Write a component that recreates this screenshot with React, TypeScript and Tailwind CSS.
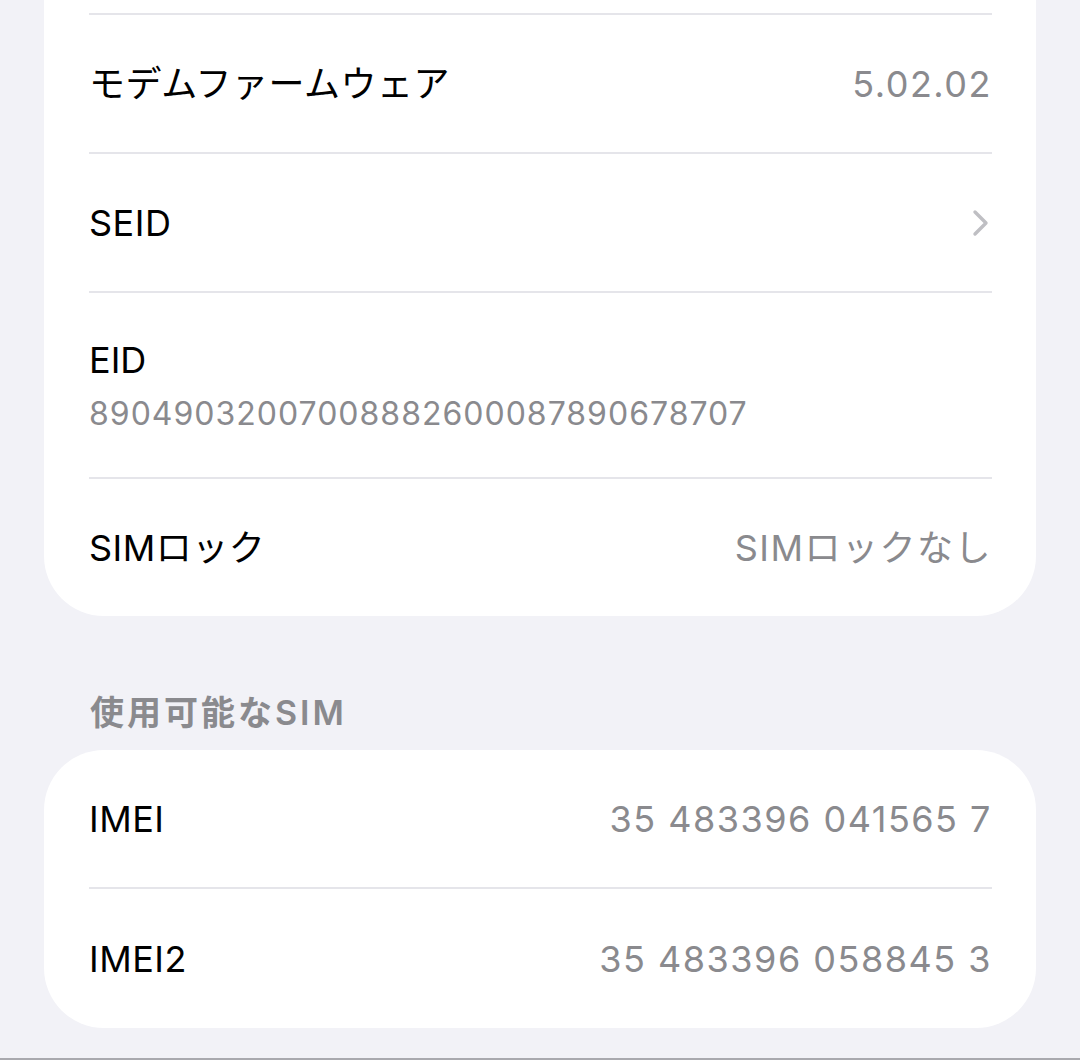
import React from "react";

const font = { fontFamily: 'Inter, "Noto Sans CJK JP", sans-serif' };

function Divider() {
  return <div className="h-[2px] bg-[#e5e5ea]" />;
}

function Row({ label, value, chevron, h = "h-[137px]" }: { label: string; value?: string; chevron?: boolean; h?: string }) {
  return (
    <div className={`flex ${h} items-center justify-between`}>
      <span className="text-[36px] leading-[44px] tracking-[0.5px] text-black">{label}</span>
      {value && <span className="text-[36px] leading-[44px] tracking-[1.5px] text-[#8a8a8e]">{value}</span>}
      {chevron && (
        <svg width="18" height="28" viewBox="0 0 18 28" className="mr-[2px]">
          <path d="M3 3 L14 14 L3 25" fill="none" stroke="#bfbfc3" strokeWidth="3.4" strokeLinecap="round" strokeLinejoin="round" />
        </svg>
      )}
    </div>
  );
}

export default function App() {
  return (
    <div className="flex h-[1060px] w-[1080px] flex-col overflow-hidden bg-[#f2f2f7]" style={font}>
      <div className="px-[44px]">
        <div className="rounded-b-[60px] bg-white pl-[45px] pr-[44px] pt-[13px]">
          <Divider />
          <Row label="モデムファームウェア" value="5.02.02" />
          <Divider />
          <Row label="SEID" chevron />
          <Divider />
          <div className="flex h-[184px] flex-col pt-[45px]">
            <span className="text-[36px] leading-[44px] text-black">EID</span>
            <span className="mt-[12px] text-[32px] leading-[40px] tracking-[1px] text-[#8a8a8e]">89049032007008882600087890678707</span>
          </div>
          <Divider />
          <Row label="SIMロック" value="SIMロックなし" />
        </div>
        <div className="px-[46px] pb-[17px] pt-[77px]">
          <span className="text-[34px] font-semibold leading-[40px] tracking-[3px] text-[#8a8a8e]">使用可能なSIM</span>
        </div>
        <div className="rounded-[60px] bg-white pl-[45px] pr-[44px]">
          <Row label="IMEI" value="35 483396 041565 7" />
          <Divider />
          <Row label="IMEI2" value="35 483396 058845 3" h="h-[139px]" />
        </div>
      </div>
      <div className="flex-1" />
      <div className="h-[2px] bg-[#a9a9ae]" />
    </div>
  );
}
